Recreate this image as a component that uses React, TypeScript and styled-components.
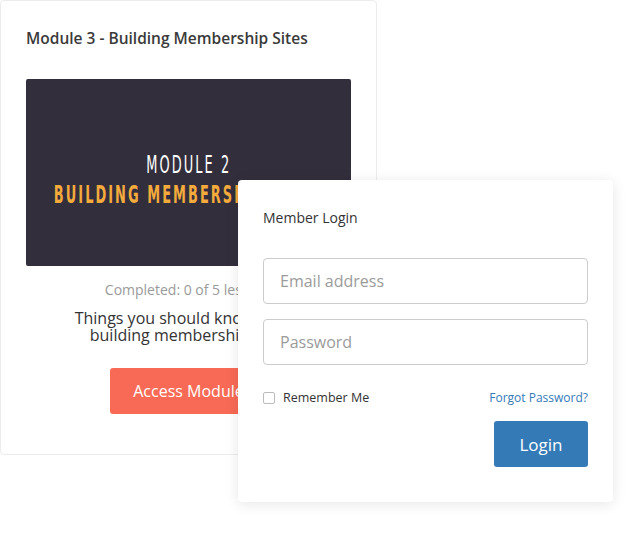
import * as React from 'react'
import styled, { createGlobalStyle } from 'styled-components'

const Global = createGlobalStyle`
  html, body { margin: 0; padding: 0; background: #fff; }
  body { font-family: "Open Sans", "Noto Sans", sans-serif; color: #333; }
  * { box-sizing: border-box; }
`

const Page = styled.div`
  position: relative;
  width: 644px;
  height: 543px;
`

const ModuleCard = styled.div`
  width: 377px;
  height: 455px;
  border: 1px solid #ececec;
  border-radius: 4px;
  padding: 26px 25px 0 25px;
  display: flex;
  flex-direction: column;
  align-items: center;
`

const ModuleTitle = styled.h3`
  align-self: stretch;
  margin: 0 0 30px;
  font-size: 15.5px;
  font-weight: 600;
  line-height: 22px;
  color: #3a3a3a;
`

const Banner = styled.div`
  align-self: stretch;
  height: 187px;
  background: #332e3c;
  border-radius: 2px;
  display: flex;
  flex-direction: column;
  align-items: center;
  justify-content: center;
  padding-top: 15px;
  font-family: "DejaVu Sans Condensed", "DejaVu Sans", sans-serif;
`

const BannerLine = styled.div<{ $accent?: boolean }>`
  font-size: 24px;
  line-height: 30px;
  letter-spacing: 3.4px;
  font-weight: ${(p) => (p.$accent ? 700 : 400)};
  color: ${(p) => (p.$accent ? '#f4ab3c' : '#ffffff')};
  transform: scaleX(0.6);
  white-space: nowrap;
`

const Progress = styled.div`
  margin-top: 14px;
  font-size: 14px;
  line-height: 20px;
  color: #9a9a9a;
`

const Summary = styled.p`
  margin: 10px 0 0;
  text-align: center;
  font-size: 16px;
  line-height: 16.5px;
  color: #333;
`

const AccessButton = styled.button`
  margin-top: 25px;
  height: 46px;
  padding: 0 23px;
  border: none;
  border-radius: 3px;
  background: #f86a55;
  color: #fff;
  font-family: inherit;
  font-size: 16px;
`

const LoginCard = styled.form`
  position: absolute;
  left: 238px;
  top: 180px;
  width: 375px;
  height: 322px;
  background: #fff;
  border-radius: 4px;
  box-shadow: 0 2px 14px rgba(0, 0, 0, 0.1);
  padding: 28px 25px 0 25px;
  display: flex;
  flex-direction: column;
`

const LoginTitle = styled.div`
  font-size: 14px;
  line-height: 20px;
  color: #333;
  margin-bottom: 30px;
`

const Field = styled.input`
  height: 46px;
  width: 100%;
  border: 1px solid #cccccc;
  border-radius: 4px;
  padding: 0 16px;
  font-family: inherit;
  font-size: 16px;
  color: #333;
  margin-bottom: 15px;
  &::placeholder { color: #9b9b9b; }
`

const OptionsRow = styled.div`
  display: flex;
  align-items: center;
  justify-content: space-between;
  margin-top: 9px;
`

const Remember = styled.label`
  display: flex;
  align-items: center;
  gap: 8px;
  font-size: 12.5px;
  color: #333;
`

const Box = styled.span`
  width: 12px;
  height: 12px;
  border: 1px solid #bbb;
  border-radius: 2px;
  background: #fff;
`

const ForgotLink = styled.a`
  font-size: 12px;
  color: #337ab7;
  text-decoration: none;
`

const LoginButton = styled.button`
  align-self: flex-end;
  margin-top: 15px;
  width: 94px;
  height: 46px;
  border: none;
  border-radius: 3px;
  background: #337ab7;
  color: #fff;
  font-family: inherit;
  font-size: 17px;
`

export default function App() {
  return (
    <Page>
      <Global />
      <ModuleCard>
        <ModuleTitle>Module 3 - Building Membership Sites</ModuleTitle>
        <Banner>
          <BannerLine>MODULE 2</BannerLine>
          <BannerLine $accent>BUILDING MEMBERSHIP SITES</BannerLine>
        </Banner>
        <Progress>Completed: 0 of 5 lessons</Progress>
        <Summary>
          Things you should know about
          <br />
          building membership sites
        </Summary>
        <AccessButton type="button">Access Module</AccessButton>
      </ModuleCard>

      <LoginCard onSubmit={(e) => e.preventDefault()}>
        <LoginTitle>Member Login</LoginTitle>
        <Field type="email" placeholder="Email address" />
        <Field type="password" placeholder="Password" />
        <OptionsRow>
          <Remember>
            <Box />
            Remember Me
          </Remember>
          <ForgotLink href="#">Forgot Password?</ForgotLink>
        </OptionsRow>
        <LoginButton type="submit">Login</LoginButton>
      </LoginCard>
    </Page>
  )
}
